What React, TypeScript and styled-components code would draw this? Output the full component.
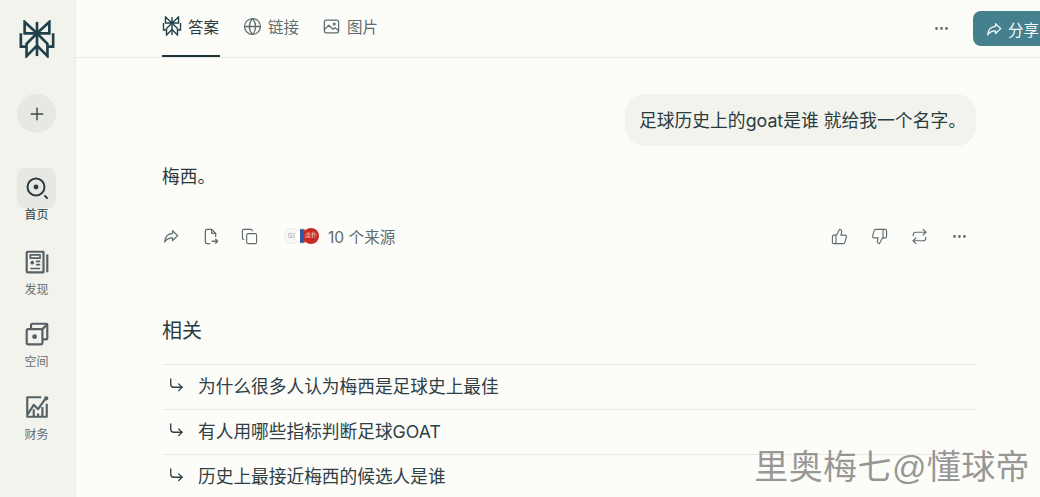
import React, { FC, ReactNode } from "react";
import styled, { createGlobalStyle } from "styled-components";
import { Copy, Ellipsis, Globe, Plus, Repeat, ThumbsDown, ThumbsUp } from "lucide-react";

const FONT = `Inter, "Noto Sans CJK SC", "Noto Sans", sans-serif`;

const GlobalStyle = createGlobalStyle`
  html, body {
    margin: 0;
    padding: 0;
    width: 1040px;
    height: 497px;
    overflow: hidden;
    background: #fcfcf9;
    font-family: ${FONT};
  }
  * { box-sizing: border-box; }
`;

const Page = styled.div`
  position: relative;
  display: flex;
  width: 1040px;
  height: 497px;
  overflow: hidden;
  background: #fcfcf9;
`;

const Sidebar = styled.aside`
  flex: 0 0 76px;
  display: flex;
  flex-direction: column;
  align-items: center;
  padding: 20px 2px 0 0;
  background: #f3f3ee;
  border-right: 1px solid #efefea;
`;

const LogoWrap = styled.div`
  height: 38px;
  margin-bottom: 36px;
  color: #20414a;
`;

const NewButton = styled.div`
  width: 39px;
  height: 39px;
  margin-bottom: 35px;
  border-radius: 50%;
  background: #e8e8e3;
  color: #3b4a4e;
  display: flex;
  align-items: center;
  justify-content: center;
`;

const NavItem = styled.div`
  display: flex;
  flex-direction: column;
  align-items: center;
  height: 72.6px;
`;

const NavIcon = styled.div<{ $active?: boolean }>`
  width: 39px;
  height: 40px;
  border-radius: 8px;
  display: flex;
  align-items: center;
  justify-content: center;
  background: ${(p) => (p.$active ? "#e8e8e3" : "transparent")};
  color: ${(p) => (p.$active ? "#2c3e43" : "#556164")};
  margin-top: ${(p) => (p.$active ? 0 : 1)}px;
`;

const NavLabel = styled.div<{ $active?: boolean }>`
  font-size: 12px;
  line-height: 16px;
  margin-top: ${(p) => (p.$active ? -1 : 0)}px;
  color: ${(p) => (p.$active ? "#2c3e43" : "#646f72")};
`;

const Main = styled.main`
  flex: 1;
  min-width: 0;
  display: flex;
  flex-direction: column;
`;

const Header = styled.header`
  flex: 0 0 58px;
  display: flex;
  align-items: stretch;
  padding-left: 86px;
  border-bottom: 1px solid #e9e9e5;
`;

const Tabs = styled.nav`
  display: flex;
  gap: 23px;
  flex: 1;
`;

const Tab = styled.div<{ $active?: boolean }>`
  display: flex;
  align-items: center;
  gap: 6px;
  height: 57px;
  padding-bottom: 3px;
  padding-right: ${(p) => (p.$active ? 1 : 0)}px;
  font-size: 15.5px;
  color: ${(p) => (p.$active ? "#2a3b40" : "#5f6c70")};
  border-bottom: 2px solid ${(p) => (p.$active ? "#20343a" : "transparent")};
`;

const TabMark = styled.span`
  display: flex;
  color: #20414a;
`;

const HeaderRight = styled.div`
  display: flex;
  align-items: center;
  height: 57px;
  color: #5f6c70;
`;

const ShareButton = styled.div`
  width: 90px;
  height: 35px;
  margin-left: 23px;
  margin-right: -23px;
  padding-left: 12px;
  display: flex;
  align-items: center;
  gap: 5px;
  border-radius: 8px;
  background: #45808e;
  color: #f4f8f8;
  font-size: 15.5px;
  flex-shrink: 0;
`;

const Thread = styled.div`
  width: 814px;
  margin-left: 86px;
  display: flex;
  flex-direction: column;
`;

const Question = styled.div`
  align-self: flex-end;
  margin-top: 36px;
  height: 52px;
  padding: 0 10px 3px 14px;
  display: flex;
  align-items: center;
  border-radius: 20px;
  background: #f3f3ee;
  font-size: 17.8px;
  color: #2a3b40;
  white-space: nowrap;
`;

const Answer = styled.p`
  margin: 18px 0 0;
  font-size: 17.7px;
  line-height: 26px;
  color: #2a3b40;
`;

const Actions = styled.div`
  display: flex;
  align-items: center;
  justify-content: space-between;
  margin-top: 36px;
  height: 20px;
  color: #5f6c70;
`;

const ActionGroup = styled.div<{ $gap: number }>`
  display: flex;
  align-items: center;
  gap: ${(p) => p.$gap}px;
`;

const RightActions = styled(ActionGroup)`
  margin: 1px 8px 0 0;
`;

const Sources = styled.div`
  display: flex;
  align-items: center;
  margin-left: 5px;
`;

const Favicon = styled.div<{ $bg: string; $color: string; $light?: boolean }>`
  width: 16px;
  height: 16px;
  margin-left: -6.5px;
  border-radius: 50%;
  background: ${(p) => p.$bg};
  color: ${(p) => p.$color};
  border: ${(p) => (p.$light ? "1px solid #ebebe6" : "none")};
  font-size: 6px;
  line-height: 14px;
  text-align: center;
  overflow: hidden;
  &:first-child {
    margin-left: 0;
  }
`;

const SourceCount = styled.span`
  margin-left: 9px;
  font-size: 15.6px;
  color: #5f6c70;
`;

const RelatedTitle = styled.h2`
  margin: 70px 0 18px;
  height: 30px;
  font-size: 20px;
  line-height: 30px;
  font-weight: 400;
  color: #2a3b40;
`;

const RelatedRow = styled.div`
  display: flex;
  align-items: center;
  gap: 13px;
  height: 45px;
  padding: 0 0 4px 5px;
  border-top: 1px solid #e9e9e5;
  font-size: 17.7px;
  color: #2f4045;
  white-space: nowrap;
`;

const Watermark = styled.div`
  position: absolute;
  right: 10px;
  top: 444px;
  font-size: 34px;
  line-height: 46px;
  color: rgba(118, 118, 116, 0.75);
  white-space: nowrap;
  letter-spacing: 0.4px;
  font-family: "Liberation Sans", "Noto Sans CJK SC", sans-serif;
`;

const Icon: FC<{ size: number; sw?: number; children: ReactNode }> = ({ size, sw = 1.6, children }) => (
  <svg
    width={size}
    height={size}
    viewBox="0 0 24 24"
    fill="none"
    stroke="currentColor"
    strokeWidth={sw}
    strokeLinecap="round"
    strokeLinejoin="round"
  >
    {children}
  </svg>
);

const Logo: FC<{ size: number; sw: number }> = ({ size, sw }) => (
  <svg width={size} height={size} viewBox="0 0 36 40" fill="none" stroke="currentColor" strokeWidth={sw} strokeLinejoin="miter">
    <path d="M18 14 L5 2 V14 H18 H31 V2 Z" />
    <path d="M18 2 V38" />
    <path d="M1 14 V28 H7 M35 14 V28 H29" />
    <path d="M18 14 L7 25 V38 L18 27 L29 38 V25 Z" />
  </svg>
);

const ShareArrow: FC<{ size: number; sw?: number }> = ({ size, sw = 1.7 }) => (
  <Icon size={size} sw={sw}>
    <path d="M14 5 L21 11.5 L14 18 V14.5 C9.5 14.5 6 16 3.5 20 C4 13.5 8 9 14 8.5 Z" />
  </Icon>
);

const ExportFile: FC = () => (
  <Icon size={19}>
    <path d="M11 21 H7.5 A2 2 0 0 1 5.5 19 V5 A2 2 0 0 1 7.5 3 H13.5 L18.5 8 V12" />
    <path d="M13.5 3 V8 H18.5" />
    <path d="M14 18 H21 M18.5 15.5 L21 18 L18.5 20.5" />
  </Icon>
);

const ReplyArrow: FC = () => (
  <Icon size={18} sw={1.8}>
    <path d="M5 4 V11 Q5 15 9 15 H20" />
    <path d="M15.5 10.5 L20 15 L15.5 19.5" />
  </Icon>
);

const HomeGlyph: FC = () => (
  <svg width={24} height={24} viewBox="0 0 24 24" fill="none" stroke="currentColor" strokeWidth={2} strokeLinecap="round">
    <circle cx="11" cy="11" r="8.5" />
    <circle cx="11" cy="11" r="2.4" fill="currentColor" stroke="none" />
    <path d="M20 20 L22 22" />
  </svg>
);

const DiscoverGlyph: FC = () => (
  <svg width={26} height={26} viewBox="0 0 24 24" fill="none" stroke="currentColor" strokeWidth={2} strokeLinejoin="round">
    <path d="M18 2.5 H3.5 A1 1 0 0 0 2.5 3.5 V20.5 A1 1 0 0 0 3.5 21.5 H18 V2.5 Z" />
    <path d="M21.5 5 V21.5" />
    <rect x="5.8" y="5.5" width="9" height="3" strokeWidth={1.6} />
    <circle cx="7.6" cy="12.6" r="1.7" fill="currentColor" stroke="none" />
    <path d="M11 11.5 H15 M11 14.5 H15 M5.8 18 H15" strokeWidth={1.6} />
  </svg>
);

const SpacesGlyph: FC = () => (
  <svg width={26} height={26} viewBox="0 0 24 24" fill="none" stroke="currentColor" strokeWidth={2} strokeLinejoin="round">
    <rect x="2.5" y="7.5" width="14.5" height="14" rx="1.5" />
    <path d="M6.5 7.5 V3.5 A1 1 0 0 1 7.5 2.5 H20.5 A1 1 0 0 1 21.5 3.5 V16 A1 1 0 0 1 20.5 17 H17" />
    <path d="M17 7.5 L21.5 3" />
    <circle cx="9.8" cy="14.5" r="2.2" fill="currentColor" stroke="none" />
  </svg>
);

const FinanceGlyph: FC = () => (
  <svg width={26} height={26} viewBox="0 0 24 24" fill="none" stroke="currentColor" strokeWidth={2} strokeLinejoin="round">
    <path d="M16 3 H3 V21 H21 V9" />
    <path d="M3.5 18.5 L9 10 L13 14 L20 4" />
    <circle cx="20.5" cy="4" r="2" fill="currentColor" stroke="none" />
    <path d="M9 14 V21 M13 18 V21 M17 12 V21" />
  </svg>
);

const ImageGlyph: FC = () => (
  <Icon size={19}>
    <rect x="3" y="4" width="18" height="16" rx="2.5" />
    <path d="M3 16 L8.5 10.5 L14 15.5 L16.5 13.5 L21 17" />
    <circle cx="15.5" cy="8.8" r="1.1" />
  </Icon>
);

const nav = [
  { label: "首页", glyph: <HomeGlyph />, active: true },
  { label: "发现", glyph: <DiscoverGlyph /> },
  { label: "空间", glyph: <SpacesGlyph /> },
  { label: "财务", glyph: <FinanceGlyph /> },
];

const related = ["为什么很多人认为梅西是足球史上最佳", "有人用哪些指标判断足球GOAT", "历史上最接近梅西的候选人是谁"];

const App: FC = () => {
  return (
    <Page>
      <GlobalStyle />
      <Sidebar>
        <LogoWrap>
          <Logo size={38} sw={2.8} />
        </LogoWrap>
        <NewButton>
          <Plus size={20} strokeWidth={1.7} />
        </NewButton>
        {nav.map((item) => (
          <NavItem key={item.label}>
            <NavIcon $active={item.active}>{item.glyph}</NavIcon>
            <NavLabel $active={item.active}>{item.label}</NavLabel>
          </NavItem>
        ))}
      </Sidebar>
      <Main>
        <Header>
          <Tabs>
            <Tab $active>
              <TabMark>
                <Logo size={20} sw={2.8} />
              </TabMark>
              答案
            </Tab>
            <Tab>
              <Globe size={19} strokeWidth={1.6} />
              链接
            </Tab>
            <Tab>
              <ImageGlyph />
              图片
            </Tab>
          </Tabs>
          <HeaderRight>
            <Ellipsis size={17} strokeWidth={2} />
            <ShareButton>
              <ShareArrow size={18} />
              分享
            </ShareButton>
          </HeaderRight>
        </Header>
        <Thread>
          <Question>足球历史上的goat是谁 就给我一个名字。</Question>
          <Answer>梅西。</Answer>
          <Actions>
            <ActionGroup $gap={21}>
              <ShareArrow size={18} />
              <ExportFile />
              <Copy size={17} strokeWidth={1.6} />
              <Sources>
                <Favicon $bg="#f7f8f8" $color="#8a9aa0" $light>
                  GX
                </Favicon>
                <Favicon $bg="linear-gradient(90deg, #fff 35%, #2b5ca8 35% 65%, #d8453f 65%)" $color="transparent" $light />
                <Favicon $bg="#c62a26" $color="#f6dcd6">
                  虎扑
                </Favicon>
                <SourceCount>10 个来源</SourceCount>
              </Sources>
            </ActionGroup>
            <RightActions $gap={23}>
              <ThumbsUp size={17} strokeWidth={1.6} />
              <ThumbsDown size={17} strokeWidth={1.6} />
              <Repeat size={17} strokeWidth={1.6} />
              <Ellipsis size={17} strokeWidth={2} />
            </RightActions>
          </Actions>
          <RelatedTitle>相关</RelatedTitle>
          {related.map((text) => (
            <RelatedRow key={text}>
              <ReplyArrow />
              {text}
            </RelatedRow>
          ))}
        </Thread>
      </Main>
      <Watermark>里奥梅七@懂球帝</Watermark>
    </Page>
  );
};

export default App;
